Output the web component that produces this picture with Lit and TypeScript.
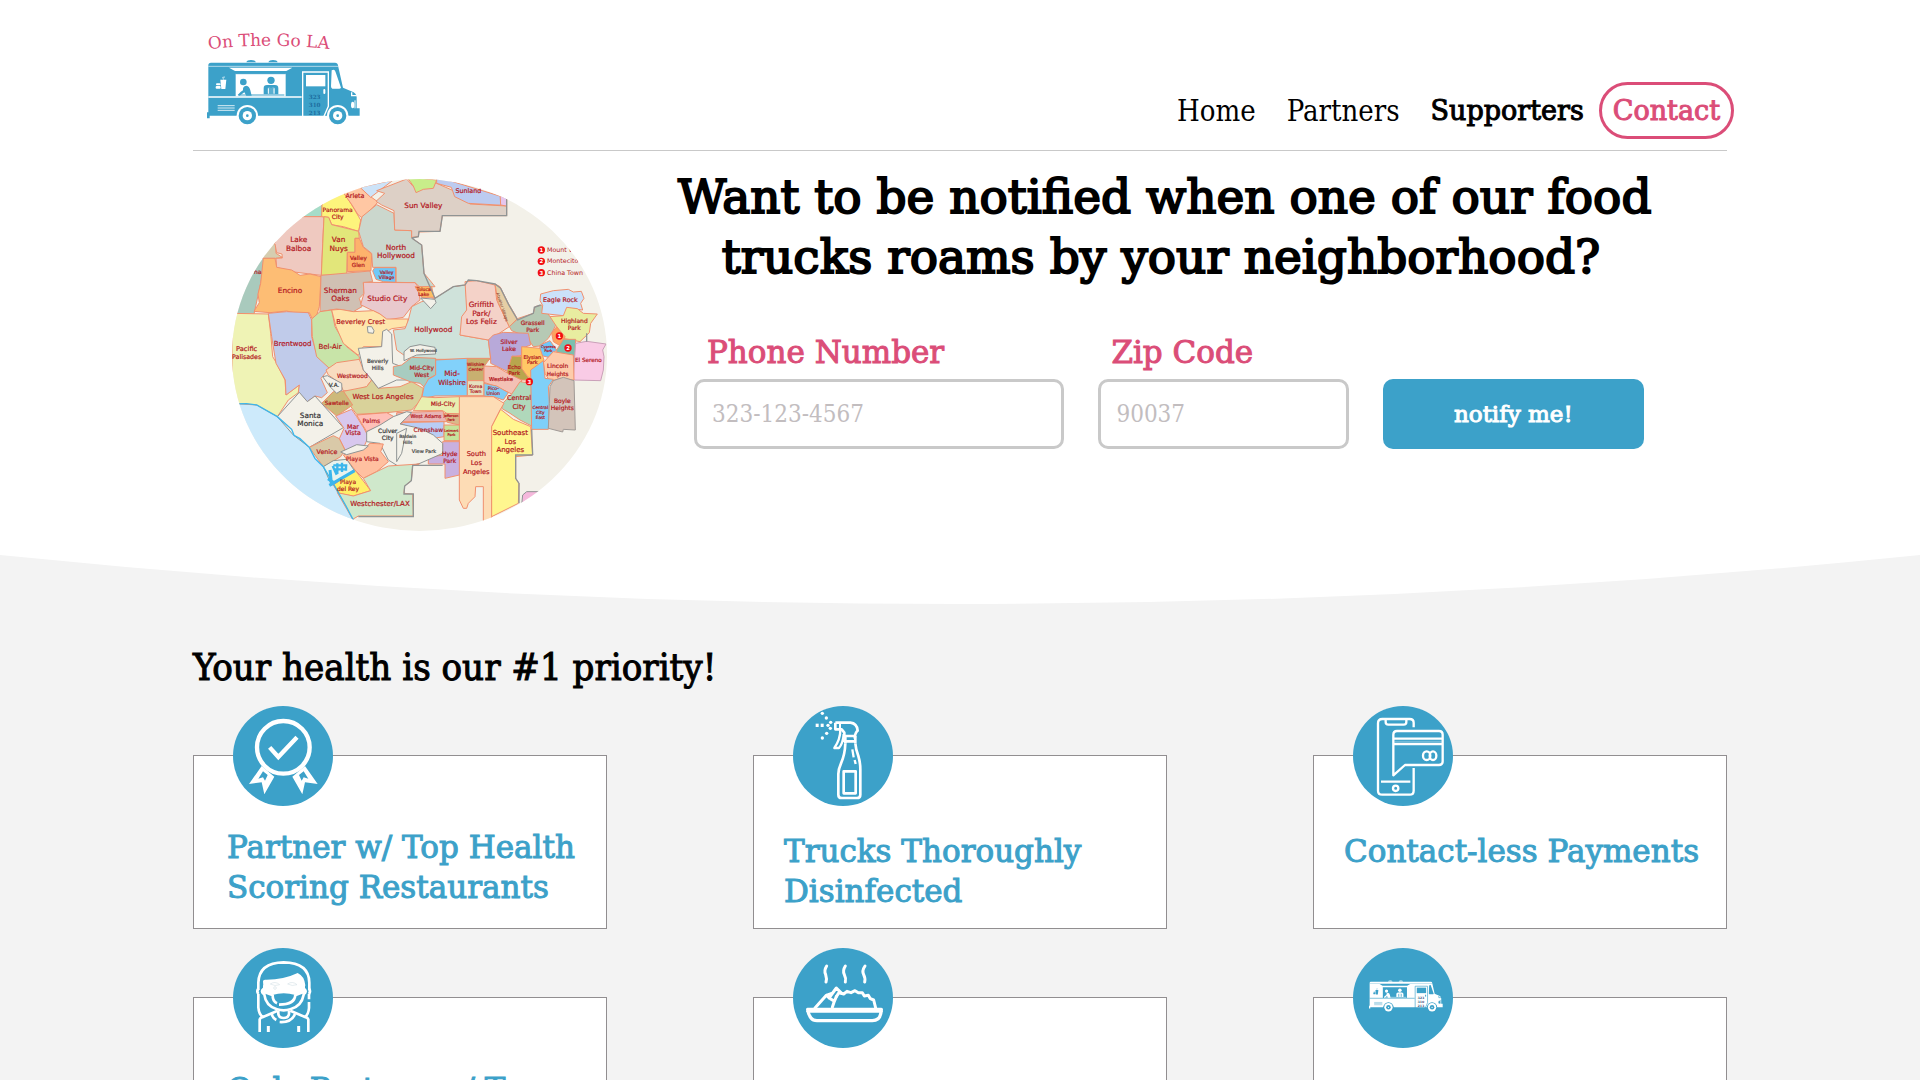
import { LitElement, html, svg, css, type TemplateResult } from "lit";
import { customElement, property } from "lit/decorators.js";

type Shape = [points: string, fill: string, stroke?: string];
type Label = [text: string, x: number, y: number, size: number, color?: string];

const GRAY = "#8f9494";
const LAND = "#f3f1e9";

const SHAPES: Shape[] = [
  ["36,430 102,432 122,340 134,265 90,265 36,300", "#a9cabd"],
  ["120,265 168,265 187,262 168,250 165,180 100,230", "#d5cdb0"],
  ["230,142 308,140 306,90 240,120", "#a5dcc8"],
  ["164,180 180,140 312,140 308,220 304,316 270,312 215,305 170,292 168,265 187,264 186,252 170,248 165,222 150,218", "#efc9c0"],
  ["305,140 307,70 370,66 395,104 416,140 422,150 416,184 370,170 335,164 326,142", "#fdf47c"],
  ["366,62 430,46 452,80 474,96 452,120 440,138 424,142 414,134 394,102", "#ffc7a3"],
  ["420,52 452,82 478,62 520,30", "#cde3f8"],
  ["312,140 326,142 335,164 416,184 418,205 405,205 405,247 382,247 380,314 304,316", "#e2e67a"],
  ["382,247 405,247 405,205 418,205 430,232 455,252 453,302 382,305", "#fdb36c"],
  ["416,184 426,140 470,104 522,130 524,180 575,182 575,204 605,225 612,310 625,325 645,350 600,352 585,338 528,337 528,292 458,292 455,250 430,230", "#cbd7cd"],
  ["458,303 464,293 527,293 527,337 490,335 468,328", "#6fc8f8"],
  ["468,94 494,70 470,62 560,27 580,50 650,40 700,62 750,102 860,108 860,137 667,137 660,184 597,186 595,200 575,202 575,182 524,180 522,122 485,105", "#ddd0c6"],
  ["560,20 650,30 640,55 610,58 588,68 580,48", "#c8ed8a"],
  ["650,20 862,85 850,106 745,100 704,80 694,52 650,40", "#bccbf0"],
  ["840,70 860,80 860,108 842,105", "#e6c6ee"],
  ["130,265 165,265 170,292 215,300 240,316 270,312 303,320 298,410 290,436 277,447 268,428 238,432 200,423 150,428 102,424 118,398 114,372 122,340", "#fdbd74"],
  ["303,316 450,303 458,335 430,338 432,370 418,385 426,410 400,425 350,417 300,425", "#d0c0b3"],
  ["430,337 585,338 595,352 600,390 575,410 550,442 500,450 480,432 450,418 422,404 432,370", "#e9c9cd"],
  ["36,430 145,432 152,490 158,560 170,580 195,630 198,675 238,645 235,668 205,690 172,740 110,705 36,700", "#eff3b5"],
  ["145,430 200,425 265,428 275,450 275,500 288,545 328,595 303,625 322,668 305,683 285,678 262,695 235,667 238,645 198,675 196,630 168,580 155,500", "#c0cbea"],
  ["275,447 300,425 335,420 345,470 380,530 418,560 418,574 360,592 328,595 290,560 277,500", "#c8e4a8"],
  ["335,420 360,418 400,425 460,422 480,432 500,447 565,447 560,470 515,476 490,490 485,530 430,530 415,556 370,520 348,470", "#fee5ab"],
  ["318,600 350,578 418,568 430,600 455,630 440,650 400,664 370,662 360,640 325,615", "#f8dcc0"],
  ["365,665 440,650 455,630 475,655 540,650 575,635 610,655 603,690 575,720 500,728 410,733 385,700", "#d9d29a"],
  ["305,700 340,665 370,663 398,705 350,738", "#cdb97a"],
  ["308,620 322,617 365,640 366,660 350,670 330,650", LAND, GRAY],
  ["415,535 485,530 488,484 500,478 515,492 518,580 545,590 570,595 568,630 530,630 475,655 448,620 430,600", LAND, GRAY],
  ["442,470 455,470 462,482 460,490 444,488", LAND, GRAY],
  ["565,450 575,410 605,395 645,385 700,350 737,345 742,420 720,495 805,510 812,568 570,568 530,540 520,480 555,476", "#cfe2da"],
  ["570,530 600,524 645,532 647,552 590,555 552,572 552,545", LAND, GRAY],
  ["585,350 635,350 642,382 605,382", "#fdc064"],
  ["602,384 645,388 648,398 632,416", LAND, GRAY],
  ["735,335 770,332 825,345 830,390 868,470 830,495 805,510 720,495 725,440 740,420", "#f4d2c8"],
  ["825,342 840,350 865,400 892,446 868,470 835,400", "#e6cfa5"],
  ["868,470 895,445 940,430 945,410 965,405 990,440 1010,460 1000,480 985,505 960,528 940,530 920,500 875,482", "#b6c9b4"],
  ["962,372 1000,362 1045,358 1060,366 1084,364 1092,385 1082,400 1088,420 1050,415 1030,437 965,430 968,406 960,392", "#cbe2fa"],
  ["990,440 1030,437 1040,412 1072,416 1090,430 1132,432 1112,460 1108,488 1080,515 1030,505 1010,470", "#e8eda0"],
  ["995,490 1010,470 1035,500 1025,530 1000,515", "#fda25f"],
  ["1010,540 1030,508 1067,508 1065,560 1040,580 1012,575", "#7cbfae"],
  ["1067,520 1100,514 1158,522 1148,540 1152,560 1150,600 1142,632 1060,630 1064,560", "#f9cbe5", "#c9a0b8"],
  ["960,525 990,512 1010,540 985,562 958,555", "#6fc8f8"],
  ["820,495 850,487 925,490 932,525 905,535 905,556 880,560 870,608 812,580 812,565 805,510", "#b8a9d9"],
  ["905,530 960,535 972,570 960,612 935,626 915,615 905,600", "#ffc866"],
  ["876,558 905,560 905,595 930,630 880,630 860,610", "#b8a64d"],
  ["970,578 1000,545 1060,555 1062,630 1020,625 990,635 975,610", "#fdccab"],
  ["520,590 545,585 575,562 647,565 647,615 625,626 622,660 600,640 570,635 520,615", "#a8ccc0"],
  ["647,570 742,565 742,677 645,678 605,686 612,650 625,628 647,615", "#82d1fa"],
  ["742,565 810,565 792,590 792,632 742,632", "#c8b070"],
  ["742,632 792,632 792,677 742,677", "#e5e0c0"],
  ["792,588 830,590 860,608 905,630 900,660 875,672 830,650 792,637", "#f3c1b5"],
  ["792,640 830,648 865,668 850,690 820,680 792,678", "#7fcdf5"],
  ["850,698 875,672 900,635 935,640 935,768 900,750 870,730 845,715", "#b0d8bb"],
  ["932,600 970,572 975,625 1000,628 985,650 988,700 985,778 935,778", "#7fd0f8"],
  ["990,650 1000,632 1030,622 1062,632 1066,780 1030,778 1028,786 985,775 988,700", "#d3c4ba", "#a09a96"],
  ["718,680 820,680 852,700 840,720 815,770 817,860 827,862 827,945 815,948 815,1060 790,1052 790,950 767,950 765,980 745,1000 740,1015 730,1015 718,990", "#fddcb5"],
  ["815,770 842,718 880,748 932,770 938,855 887,860 887,925 897,940 895,1000 815,1040", "#fff68f"],
  ["580,722 605,680 645,683 718,680 718,732 680,730 668,722", "#e8efb0"],
  ["530,728 668,723 684,755 530,755", "#e8b5b5"],
  ["670,730 718,732 718,765 682,757", "#d9b98a"],
  ["540,758 672,755 672,800 640,805 612,832 600,790", "#b9cdf5"],
  ["672,765 718,765 718,812 672,812", "#c5e39b"],
  ["668,815 718,815 718,915 675,925 675,882 625,882 625,860 668,856", "#c9b0df"],
  ["172,740 238,667 262,695 285,678 370,773 268,832 220,795", LAND, GRAY],
  ["347,738 395,718 410,740 432,775 445,800 430,835 405,834 375,840 358,806 372,775", "#d8c8ee"],
  ["410,735 500,728 522,740 490,762 440,785", "#ffc0b8"],
  ["440,785 480,765 520,740 560,725 575,728 540,762 600,775 640,795 668,820 668,850 600,880 545,895 505,870 480,820 440,815", LAND, GRAY],
  ["530,790 560,775 545,850 530,875", LAND, GRAY],
  ["268,832 340,797 358,806 375,840 362,860 310,890", "#d9c9a8"],
  ["370,855 430,838 450,820 490,822 482,845 505,875 470,905 430,925 405,900", "#ffc0a0"],
  ["362,846 410,824 445,828 430,840 380,854", LAND, GRAY],
  ["310,890 340,872 380,868 402,900 335,946", "#e9f3ee", "#8a9694"],
  ["340,945 405,900 452,962 400,978 355,970", "#fff06a"],
  ["430,925 470,905 505,888 598,882 578,886 574,932 554,948 552,970 578,972 580,1038 415,1038 398,1048 352,968 400,978 452,962", "#cfe8cb"],
  ["908,975 920,965 1000,965 905,1005", "#f5b8dc", GRAY],
];

const LABELS: Label[] = [
  ["Arleta", 405, 84, 19],
  ["Panorama", 353, 125, 18],
  ["City", 353, 146, 18],
  ["Lake", 236, 217, 22],
  ["Balboa", 236, 243, 22],
  ["Van", 356, 217, 22],
  ["Nuys", 356, 243, 22],
  ["Valley", 415, 270, 17],
  ["Glen", 415, 290, 17],
  ["North", 528, 239, 22],
  ["Hollywood", 528, 265, 22],
  ["Valley", 500, 312, 14],
  ["Village", 500, 328, 14],
  ["Encino", 210, 369, 22],
  ["Sherman", 361, 369, 22],
  ["Oaks", 361, 394, 22],
  ["Studio City", 502, 393, 22],
  ["na", 113, 313, 18],
  ["Sun Valley", 610, 114, 22],
  ["Sunland", 745, 69, 19],
  ["Beverley Crest", 422, 461, 20],
  ["Brentwood", 218, 528, 21],
  ["Bel-Air", 330, 537, 21],
  ["Pacific", 80, 543, 20],
  ["Palisades", 80, 568, 19],
  ["Beverly", 473, 580, 17, "#444"],
  ["Hills", 473, 600, 17, "#444"],
  ["Toluca", 611, 364, 14],
  ["Lake", 611, 379, 14],
  ["Griffith", 784, 412, 22],
  ["Park/", 784, 437, 22],
  ["Los Feliz", 784, 463, 22],
  ["Hollywood", 640, 485, 22],
  ["W. Hollywood", 610, 546, 12, "#444"],
  ["Eagle Rock", 1021, 397, 19],
  ["Grassell", 938, 464, 18],
  ["Park", 938, 485, 18],
  ["Highland", 1063, 459, 18],
  ["Park", 1063, 479, 18],
  ["Silver", 867, 522, 18],
  ["Lake", 867, 543, 18],
  ["Elysian", 937, 568, 15],
  ["Park", 937, 583, 15],
  ["Cypress", 985, 534, 11],
  ["Park", 985, 545, 11],
  ["El Sereno", 1105, 576, 17],
  ["Westwood", 397, 625, 18],
  ["V.A.", 342, 652, 17, "#333"],
  ["West Los Angeles", 489, 688, 21],
  ["Sawtelle", 350, 706, 17],
  ["Santa", 271, 744, 22, "#333"],
  ["Monica", 271, 769, 22, "#333"],
  ["Mar", 399, 776, 19],
  ["Vista", 399, 796, 19],
  ["Palms", 454, 760, 18],
  ["Culver", 503, 789, 18, "#333"],
  ["City", 503, 809, 18, "#333"],
  ["Baldwin", 563, 805, 13, "#444"],
  ["Hills", 563, 822, 13, "#444"],
  ["Venice", 321, 853, 19],
  ["Playa Vista", 427, 874, 18],
  ["Playa", 384, 942, 18],
  ["del Rey", 384, 962, 18],
  ["Westchester/LAX", 480, 1008, 21],
  ["Mid-City", 605, 600, 18],
  ["West", 605, 620, 18],
  ["Mid-", 696, 619, 22],
  ["Wilshire", 696, 645, 21],
  ["Wilshire", 767, 588, 13],
  ["Center", 767, 604, 13],
  ["Korea", 767, 654, 14],
  ["Town", 767, 669, 14],
  ["Echo", 883, 596, 16],
  ["Park", 883, 614, 16],
  ["Westlake", 843, 633, 16],
  ["Pico-", 820, 660, 14],
  ["Union", 820, 675, 14],
  ["Lincoln", 1013, 595, 18],
  ["Heights", 1013, 617, 17],
  ["Central", 897, 690, 20],
  ["City", 897, 716, 20],
  ["Central", 961, 716, 13],
  ["City", 961, 731, 13],
  ["East", 961, 746, 13],
  ["Boyle", 1027, 698, 18],
  ["Heights", 1027, 719, 18],
  ["Mid-City", 669, 707, 18],
  ["West Adams", 618, 743, 15],
  ["Jefferson", 693, 742, 10],
  ["Park", 693, 754, 10],
  ["Crenshaw", 625, 785, 18],
  ["Leimert", 694, 785, 11],
  ["Park", 694, 797, 11],
  ["View Park", 612, 850, 15, "#444"],
  ["Hyde", 689, 859, 18],
  ["Park", 689, 879, 18],
  ["South", 769, 859, 20],
  ["Los", 769, 885, 20],
  ["Angeles", 769, 911, 20],
  ["Southeast", 871, 795, 21],
  ["Los", 871, 821, 21],
  ["Angeles", 871, 847, 21],
];

const MARKERS: [string, number, number][] = [
  ["1", 964, 240],
  ["2", 964, 274],
  ["3", 964, 308],
  ["1", 1018, 498],
  ["2", 1044, 534],
  ["3", 928, 635],
];

const cityMap = () => svg`
  <rect x="36" y="27" width="1125" height="1056" fill=${LAND} />
  <path d="M36 702 L110 705 L172 740 L222 790 L232 800 L268 832 L310 890 L345 950 L400 1050 L420 1083 L36 1083 Z" fill="#cdeafb" />
  ${SHAPES.map(
    ([points, fill, stroke]) => svg`<polygon points=${points} fill=${fill} stroke=${stroke ?? "#f0906e"} stroke-width="3" stroke-linejoin="round" />`,
  )}
  <path d="M36 702 L80 701 L110 705 L172 740 L215 778 L222 796 L240 806 L268 832 L285 866 L310 890 L345 950 L378 1008 L400 1050" fill="none" stroke="#3bb6ec" stroke-width="4" />
  <path d="M328 946 L404 902 M324 926 L342 938 M330 900 L334 938" fill="none" stroke="#3bb6ec" stroke-width="9" />
  <path d="M338 888 L350 914 M352 880 V912 M366 878 V906 M378 886 V902 M340 886 H382 M342 898 H380" fill="none" stroke="#3bb6ec" stroke-width="7" />
  <path d="M575 204 L605 225 L612 310 L645 385 L700 350 L735 345 L745 330 L770 332 L825 342 L842 355 L866 404 L893 450 L940 430 L943 412 L962 405 M860 85 V137 H667 L660 184 H597 L595 200 L575 204" fill="none" stroke=${GRAY} stroke-width="4" />
  <path d="M938 855 H887 V925 L897 940 V1000 M935 778 L938 855 M415 1040 H580 V972 H552 L554 948 L574 932 L578 886 H668 M1100 490 V515" fill="none" stroke=${GRAY} stroke-width="4" />
  ${LABELS.map(
    ([text, x, y, size, color]) => svg`<text class="place" x=${x} y=${y} font-size=${size} fill=${color ?? "#b3161d"} stroke=${color ?? "#b3161d"}>${text}</text>`,
  )}
  <text class="place" transform="translate(843 412) rotate(72)" font-size="12" fill="#7b2a1d">Atwater Village</text>
  ${MARKERS.map(
    ([n, x, y]) => svg`<circle cx=${x} cy=${y} r="11" fill="#f20d12" /><text class="marker" x=${x} y=${y + 6}>${n}</text>`,
  )}
  <text class="legend" x="981" y="246">Mount W</text>
  <text class="legend" x="981" y="280">Montecito H</text>
  <text class="legend" x="981" y="314">China Town</text>
`;

/* Food truck in a 460 x 194 box; `body` paints the vehicle, `cut` the openings. */
const truck = (body: string, cut: string, digits: string) => svg`
  <path d="M118 8 Q120 1 132 1 Q144 1 147 8 Z M184 8 Q187 1 198 1 Q210 1 212 8 Z" fill=${body} />
  <path d="M12 9 H384 Q392 9 393 17 L394 22 L408 84 L440 98 Q449 103 449 112 V146 H458 V168 H424 A32 32 0 0 0 362 168 H153 A34 34 0 0 0 89 168 H8 V176 H0 V158 H4 V17 Q4 9 12 9 Z" fill=${body} />
  <path d="M4 20 H394" stroke=${cut} stroke-width="3" opacity="0.6" />
  <path d="M66 24 H256 L238 34 H84 Z" fill=${cut} />
  <rect x="86" y="42" width="150" height="68" fill=${cut} />
  <path d="M86 42 H236" stroke=${body} stroke-width="3" />
  <path d="M4 112 H284" stroke=${cut} stroke-width="4" />
  <path d="M94 106 H232" stroke=${body} stroke-width="3" />
  <circle cx="109" cy="67" r="10" fill=${body} />
  <path d="M92 106 Q98 98 108 92 Q106 80 118 78 Q128 80 130 92 L134 108 H118 L112 98 L98 108 Z" fill=${body} />
  <circle cx="192" cy="62" r="11" fill=${body} />
  <path d="M170 104 V86 Q170 76 180 76 H204 Q214 76 214 86 V104 H202 V84 H184 V104 Z" fill=${body} />
  <path d="M184 84 H188 V76 H196 V84 H202 V104 H184 Z" fill=${body} opacity="0.85" />
  <path d="M184 86 V102 M201 86 V102" stroke=${cut} stroke-width="3" />
  <path d="M40 60 L58 60 L55 88 H43 Z" fill=${cut} />
  <path d="M50 60 L47 53 L54 52" stroke=${cut} stroke-width="2" fill="none" />
  <rect x="27" y="71" width="14" height="6" rx="3" fill=${cut} />
  <rect x="26" y="79" width="15" height="8" rx="3" fill=${cut} />
  <path d="M32 138 H83 M32 145 H83 M32 152 H83" stroke=${cut} stroke-width="3" opacity="0.8" />
  <path d="M287 174 V37 H364 V140 L350 172" fill="none" stroke=${cut} stroke-width="4" />
  <rect x="297" y="46" width="58" height="34" fill=${cut} />
  <rect x="349" y="88" width="6" height="15" rx="3" fill=${cut} />
  <path d="M374 32 Q384 26 386 38 L402 84 Q400 88 394 87 H376 Q372 86 372 80 Z" fill=${cut} />
  <path d="M434 98 V108 H449" stroke=${cut} stroke-width="4" fill="none" />
  <ellipse cx="437" cy="136" rx="5" ry="10" fill=${cut} />
  <path d="M444 122 V146" stroke=${cut} stroke-width="3" />
  ${[121, 392].map(
    (x) => svg`
      <circle cx=${x} cy="168" r="32" fill=${cut} />
      <circle cx=${x} cy="168" r="26" fill=${body} />
      <circle cx=${x} cy="168" r="14" fill=${cut} />
      <circle cx=${x} cy="168" r="4" fill=${body} />`,
  )}
  ${["323", "310", "213"].map(
    (n, i) => svg`<text class="digits" x="323" y=${117 + i * 24} fill=${digits}>${n}</text>`,
  )}
`;

const ribbonIcon = svg`
  <g fill="none" stroke="#fff" stroke-width="13">
    <circle cx="151" cy="124" r="79" />
    <path d="M110 124 L136 153 L192 94" />
  </g>
  <path fill="#fff" fill-rule="evenodd" d="M86 180 L48 234 L86 229 L94 265 L124 212 Z M90 196 L104 207 L96 224 L90 214 L76 218 Z" />
  <path fill="#fff" fill-rule="evenodd" d="M216 180 L254 234 L216 229 L208 265 L178 212 Z M212 196 L198 207 L206 224 L212 214 L226 218 Z" />`;

const sprayIcon = svg`
  <g fill="none" stroke="#fff" stroke-width="8" stroke-linejoin="round">
    <path d="M127 50 H172 Q192 52 194 74 Q186 80 185 98 M127 50 V70 H146 L154 80 V108" />
    <path d="M141 50 V70" stroke-width="6" />
    <path d="M142 72 Q142 100 124 126 H138 Q150 112 152 84" stroke-width="7" />
    <path d="M155 90 H188 M155 106 H188 M157 90 V112 M187 90 V112" />
    <path d="M157 112 Q156 146 144 172 Q136 190 136 204 V266 Q136 276 146 276 H192 Q202 276 202 266 V190 Q202 170 196 150 Q188 128 187 112" />
    <rect x="152" y="196" width="36" height="66" />
    <path d="M178 130 L182 154 M185 162 L188 174" stroke-width="7" />
  </g>
  <g fill="#fff">
    <rect x="68" y="53" width="9" height="10" /><rect x="83" y="53" width="9" height="10" />
    <circle cx="105" cy="58" r="5" /><circle cx="113" cy="49" r="5" /><circle cx="112" cy="67" r="5" />
    <circle cx="100" cy="36" r="5" /><circle cx="88" cy="22" r="5" /><circle cx="101" cy="82" r="5" /><circle cx="88" cy="96" r="5" />
  </g>`;

const phoneIcon = svg`
  <g fill="none" stroke="#fff" stroke-width="7" stroke-linejoin="round">
    <path d="M182 64 V50 Q182 39 170 39 H88 Q75 39 75 52 V254 Q75 266 88 266 H170 Q182 266 182 254 V186" />
    <path d="M98 40 V48 Q98 56 106 56 H152 Q160 56 160 48 V40" />
    <path d="M84 227 H172" />
    <circle cx="128" cy="247" r="8" />
    <path d="M121 208 V86 Q121 75 132 75 H258 Q269 75 269 86 V166 Q269 177 258 177 H156 Z" />
    <path d="M121 98 H269 M121 114 H269" />
    <path d="M124 106 H266" stroke-width="2" opacity="0.5" />
    <ellipse cx="221" cy="149" rx="11" ry="13" />
    <ellipse cx="240" cy="149" rx="10" ry="13" />
  </g>`;

const maskIcon = svg`
  <path d="M90 100 Q90 96 96 95 Q150 96 194 75 Q214 84 217 112 L212 130 Q198 134 187 141 Q152 130 118 141 L92 128 Z" fill="#fff" />
  <g fill="none" stroke="#fff" stroke-width="8">
    <path d="M76 126 V104 Q78 44 152 43 Q228 44 229 104 V126" />
    <path d="M76 138 V178 Q78 202 92 208 M228 138 V154 M228 162 V180 Q226 202 214 208" />
    <path d="M76 122 Q70 130 76 138 M92 122 Q82 130 92 138 M228 122 Q234 130 228 138 M213 122 Q223 130 213 138" />
    <path d="M94 112 V140 Q98 174 132 184 Q152 190 172 184 Q206 174 212 140 V112" />
    <path d="M94 132 L120 142 M211 132 L186 142 M119 140 Q118 160 132 166 M187 140 Q186 170 138 170" />
    <path d="M80 252 V214 Q82 208 92 206 L134 188 M226 252 V214 Q224 208 214 206 L172 188" />
    <path d="M106 234 V252 M197 234 V252" stroke-width="9" />
    <path d="M136 188 V198 Q138 210 152 210 Q166 210 168 198 V188 M116 196 Q118 210 130 216 M140 222 Q176 224 186 198" />
  </g>
  <g fill="none" stroke="#d8e4e8" stroke-width="2">
    <path d="M112 108 Q126 98 140 110 Q126 116 112 108 M164 108 Q178 98 192 110 Q178 116 164 108" /><circle cx="126" cy="120" r="4" />
  </g>`;

const mealIcon = svg`
  <g fill="none" stroke="#fff" stroke-width="9" stroke-linejoin="round" stroke-linecap="round">
    <path d="M101 54 Q92 68 98 80 Q102 92 99 102 M157 54 Q148 68 154 80 Q160 92 157 102 M216 54 Q206 68 212 80 Q218 92 215 102" />
    <path d="M44 184 H265 Q264 204 256 212 Q248 218 238 218 H72 Q60 218 54 210 Q46 200 44 184 Z" stroke-width="10" />
    <path d="M44 190 H265" stroke-width="8" />
    <path d="M66 180 L100 142 L112 152 M108 150 L130 120 L146 136 M100 142 L116 136 M112 152 L124 160 L130 146 M124 160 L118 178" />
    <path d="M130 146 L138 134 L152 138 L162 130 L174 134 L186 128 L196 134 L208 134 L214 144 L226 142 L232 152 L242 156 L248 180" />
  </g>`;

const truckIcon = svg`<svg x="48" y="92" width="222" height="108" viewBox="0 0 460 204">${truck("#fff", "#3ca1c9", "#2b4a78")}</svg>`;

@customElement("perk-card")
export class PerkCard extends LitElement {
  @property({ attribute: false }) icon: TemplateResult = svg``;
  @property({ type: Boolean, reflect: true }) lead = false;

  static styles = css`
    :host {
      display: block;
      position: relative;
      box-sizing: border-box;
      min-height: 174px;
      padding: 75px 0 10px 30px;
      background: #fff;
      border: 1px solid #918e90;
    }
    :host([lead]) {
      padding: 71px 0 14px 33px;
    }
    .badge {
      position: absolute;
      top: -50px;
      left: 39px;
      width: 100px;
      height: 100px;
      border-radius: 50%;
      background: #3ca1c9;
    }
    .digits {
      font: bold 20px "DejaVu Serif", serif;
      text-anchor: middle;
    }
  `;

  render() {
    return html`
      <svg class="badge" viewBox="0 0 300 300" aria-hidden="true">${this.icon}</svg>
      <slot></slot>
    `;
  }
}

@customElement("app-root")
export class AppRoot extends LitElement {
  static styles = css`
    :host {
      display: block;
      min-height: 100vh;
      background: #f3f3f3;
      color: #000;
      font-family: "DejaVu Serif", serif;
      --narrow: "DejaVu Serif Condensed", "DejaVu Serif", serif;
      --blue: #3ca1c9;
      --pink: #db4d78;
    }
    .top {
      background: #fff;
      padding: 0 193px;
    }
    .header {
      display: flex;
      justify-content: space-between;
      align-items: flex-end;
      height: 150px;
      border-bottom: 1px solid #c9c9c9;
    }
    .logo {
      display: block;
      margin: 0 0 22px 14px;
    }
    .logo svg {
      display: block;
      width: 155px;
      height: 96px;
      overflow: visible;
    }
    .wordmark {
      font: 51px "DejaVu Serif", serif;
      fill: var(--pink);
    }
    .digits {
      font: bold 17px "DejaVu Serif", serif;
      text-anchor: middle;
    }
    .nav {
      display: flex;
      align-items: center;
      margin: 0 -7px 11px 0;
      line-height: 36px;
    }
    .nav a {
      margin-left: 31px;
      color: #000;
      font-family: var(--narrow);
      font-size: 29px;
      text-decoration: none;
    }
    .nav .strong,
    .nav .contact {
      font-family: inherit;
      font-size: 27px;
      -webkit-text-stroke: 1px currentColor;
    }
    .nav .contact {
      box-sizing: border-box;
      margin-left: 15px;
      padding: 8px 11px 7px;
      border: 3px solid var(--pink);
      border-radius: 29px;
      color: var(--pink);
    }
    .hero {
      display: flex;
      align-items: flex-start;
      justify-content: space-between;
      padding: 16px 83px 24px 39px;
    }
    .map {
      width: 375px;
      height: 352px;
      margin-top: 12px;
      border-radius: 50%;
      flex: none;
    }
    .place,
    .legend,
    .marker {
      font-family: "DejaVu Sans", sans-serif;
      text-anchor: middle;
      stroke-width: 0.6px;
    }
    .legend {
      font-size: 19px;
      fill: #b3161d;
      text-anchor: start;
    }
    .marker {
      font-size: 16px;
      font-weight: bold;
      fill: #fff;
    }
    .signup {
      width: 966px;
    }
    h1 {
      margin: 0;
      font-size: 47px;
      line-height: 60px;
      font-weight: normal;
      text-align: center;
      white-space: nowrap;
      -webkit-text-stroke: 2px currentColor;
    }
    .form {
      display: grid;
      grid-template-columns: 370fr 250fr 261fr;
      gap: 34px;
      align-items: end;
      margin: 45px 0 0 16px;
    }
    .field {
      display: flex;
      flex-direction: column;
      gap: 7px;
    }
    .field label {
      padding-left: 13px;
      font-size: 31px;
      line-height: 40px;
      color: var(--pink);
      -webkit-text-stroke: 1px currentColor;
    }
    .field input,
    .form button {
      box-sizing: border-box;
      width: 100%;
      height: 70px;
      border-radius: 10px;
    }
    .field input {
      padding: 0 15px;
      border: 3px solid #c9c9c9;
      background: #fff;
      color: #000;
      font-family: var(--narrow);
      font-size: 24px;
    }
    .field input::placeholder {
      color: #c2bdbf;
      opacity: 1;
    }
    .form button {
      border: 0;
      background: var(--blue);
      color: #fff;
      font-family: inherit;
      font-size: 23px;
      -webkit-text-stroke: 1px currentColor;
    }
    .curve {
      display: block;
      width: 100%;
      height: 49px;
    }
    .health {
      padding: 39px 193px 60px;
    }
    h2 {
      margin: 0;
      font-family: var(--narrow);
      font-size: 38px;
      line-height: 48px;
      font-weight: normal;
      -webkit-text-stroke: 1px currentColor;
    }
    .cards {
      display: grid;
      grid-template-columns: repeat(3, 1fr);
      gap: 68px 146px;
      margin-top: 64px;
    }
    h3 {
      margin: 0;
      font-size: 31px;
      line-height: 40px;
      font-weight: normal;
      color: var(--blue);
      white-space: nowrap;
      -webkit-text-stroke: 1px currentColor;
    }
  `;

  render() {
    return html`
      <div class="top">
        <header class="header">
          <a class="logo" href="#home" aria-label="On The Go LA">
            <svg viewBox="51 36 465 288">
              <path id="arch" d="M56 88 Q250 64 480 94" fill="none" />
              <text class="wordmark"><textPath href="#arch">On The Go LA</textPath></text>
              <g transform="translate(51 119)">${truck("#3ca1c9", "#fff", "#1c6ea0")}</g>
            </svg>
          </a>
          <nav class="nav">
            <a href="#home">Home</a>
            <a href="#partners">Partners</a>
            <a class="strong" href="#supporters">Supporters</a>
            <a class="contact" href="#contact">Contact</a>
          </nav>
        </header>
        <section class="hero">
          <svg class="map" viewBox="36 27 1125 1056" preserveAspectRatio="none">${cityMap()}</svg>
          <div class="signup">
            <h1>Want to be notified when one of our food<br />trucks roams by your neighborhood?</h1>
            <form class="form">
              <div class="field">
                <label for="phone">Phone Number</label>
                <input id="phone" type="tel" placeholder="323-123-4567" />
              </div>
              <div class="field">
                <label for="zip">Zip Code</label>
                <input id="zip" type="text" placeholder="90037" />
              </div>
              <button type="button">notify me!</button>
            </form>
          </div>
        </section>
      </div>
      <svg class="curve" viewBox="0 0 1920 49" preserveAspectRatio="none" aria-hidden="true">
        <path d="M0 0 Q960 98 1920 0 Z" fill="#fff" />
      </svg>
      <main class="health">
        <h2>Your health is our #1 priority!</h2>
        <div class="cards">
          <perk-card lead .icon=${ribbonIcon}><h3>Partner w/ Top Health<br />Scoring Restaurants</h3></perk-card>
          <perk-card .icon=${sprayIcon}><h3>Trucks Thoroughly<br />Disinfected</h3></perk-card>
          <perk-card .icon=${phoneIcon}><h3>Contact-less Payments</h3></perk-card>
          <perk-card lead .icon=${maskIcon}><h3>Only Partner w/ Top</h3></perk-card>
          <perk-card .icon=${mealIcon}></perk-card>
          <perk-card .icon=${truckIcon}></perk-card>
        </div>
      </main>
    `;
  }
}
